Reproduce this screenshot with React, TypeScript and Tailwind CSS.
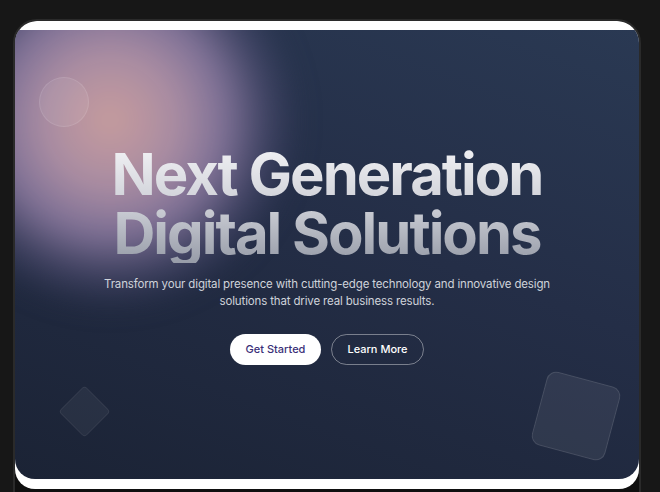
import React from 'react';

const App: React.FC = () => {
  return (
    <div className="h-screen w-full bg-[#171717] pt-[19px] pl-[13px] overflow-hidden" style={{ fontFamily: 'Inter, "Liberation Sans", sans-serif' }}>
      {/* Device frame */}
      <div className="w-[628px] h-[480px] rounded-t-[24px] border-2 border-[#2a2a2a] bg-[#0f0f0f] overflow-hidden">
        {/* Page */}
        <div className="h-[468px] rounded-[20px] bg-white pt-[9px]">
          {/* Hero */}
          <section className="relative h-[449px] rounded-b-[20px] overflow-hidden bg-[linear-gradient(200deg,#2a3953_0%,#242e47_45%,#1b2335_100%)] flex items-center justify-center">
            {/* Glow */}
            <div className="absolute -left-[95px] -top-[100px] w-[380px] h-[380px] rounded-full bg-[radial-gradient(circle_at_50%_50%,rgba(205,160,160,0.97)_0%,rgba(180,148,170,0.92)_25%,rgba(150,130,170,0.8)_42%,rgba(95,90,130,0.45)_58%,rgba(45,52,85,0.1)_70%,rgba(40,50,80,0)_74%)] blur-md" />
            {/* Small circle */}
            <div className="absolute left-[24px] top-[47px] w-[50px] h-[50px] rounded-full border border-white/10 bg-white/[0.07]" />
            {/* Diamond */}
            <div className="absolute left-[51px] top-[363px] w-[37px] h-[37px] rotate-45 rounded-[4px] border border-white/[0.06] bg-white/[0.05]" />
            {/* Tilted square */}
            <div className="absolute left-[523px] top-[348px] w-[76px] h-[76px] rotate-[15deg] rounded-[10px] border border-white/10 bg-white/[0.07]" />

            <div className="relative flex flex-col items-center text-center">
              <h1 className="text-[58px] leading-[59px] font-bold tracking-[-2px] bg-gradient-to-b from-[#f2f2f5] via-[#cfd1d8] to-[#979ca8] bg-clip-text text-transparent">
                <span className="block">Next Generation</span>
                <span className="block">Digital Solutions</span>
              </h1>
              <p className="mt-[13px] max-w-[460px] text-[11.5px] leading-[17px] tracking-[-0.15px] text-[#cfd3da]">
                Transform your digital presence with cutting-edge technology and innovative design solutions that drive real business results.
              </p>
              <div className="mt-[24px] flex gap-[10px]">
                <button className="h-[31px] w-[91px] rounded-full bg-white text-[11px] font-medium text-[#3a2f78]">
                  Get Started
                </button>
                <button className="h-[31px] w-[93px] rounded-full border border-white/40 text-[11px] font-medium text-white">
                  Learn More
                </button>
              </div>
            </div>
          </section>
        </div>
      </div>
    </div>
  );
};

export default App;
